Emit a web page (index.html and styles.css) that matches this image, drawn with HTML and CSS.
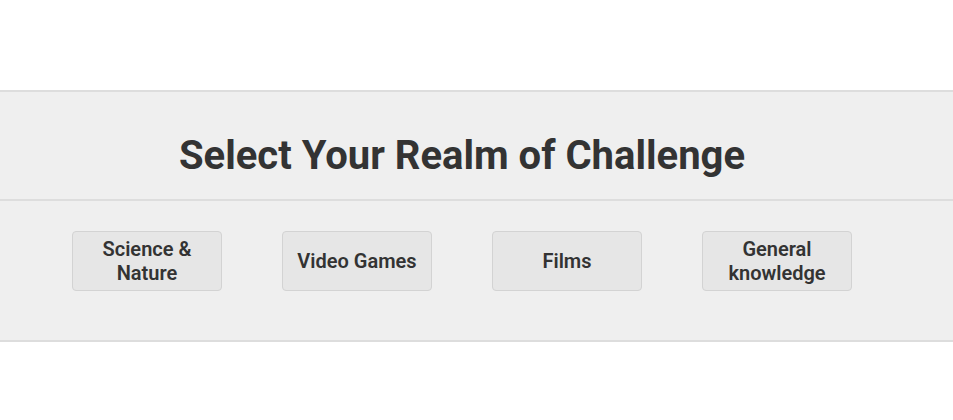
FILE: index.html
```html
<!DOCTYPE html>
<html lang="en">
<head>
<meta charset="utf-8">
<title>Select Your Realm of Challenge</title>
<link rel="stylesheet" href="styles.css">
</head>
<body>
<section class="realm">
  <header class="realm-head">
    <h1 class="realm-title">Select Your Realm of Challenge</h1>
  </header>
  <div class="realm-options">
    <button class="realm-btn">Science &amp; Nature</button>
    <button class="realm-btn">Video Games</button>
    <button class="realm-btn">Films</button>
    <button class="realm-btn">General knowledge</button>
  </div>
</section>
</body>
</html>
```
FILE: styles.css
```css
html, body {
  margin: 0;
  padding: 0;
  background: #ffffff;
  font-family: Roboto, "Liberation Sans", Arial, sans-serif;
  color: #333333;
}

.realm {
  margin-top: 90px;
  background: #efefef;
  border-top: 2px solid #dddddd;
  border-bottom: 2px solid #dddddd;
}

.realm-head {
  padding: 40px 0 20px;
  border-bottom: 2px solid #dddddd;
}

.realm-title {
  width: 924px;
  margin: 0;
  font-size: 40px;
  font-weight: 700;
  line-height: 47px;
  text-align: center;
  color: #333333;
}

.realm-options {
  width: 924px;
  display: flex;
  justify-content: center;
  gap: 60px;
  padding: 30px 0 49px;
}

.realm-btn {
  width: 150px;
  height: 60px;
  box-sizing: border-box;
  padding: 0 4px;
  background: #e6e6e6;
  border: 1px solid #d3d3d3;
  border-radius: 4px;
  font-family: Roboto, "Liberation Sans", Arial, sans-serif;
  font-size: 20px;
  font-weight: 600;
  line-height: 24px;
  color: #333333;
  text-align: center;
  cursor: pointer;
}
```
